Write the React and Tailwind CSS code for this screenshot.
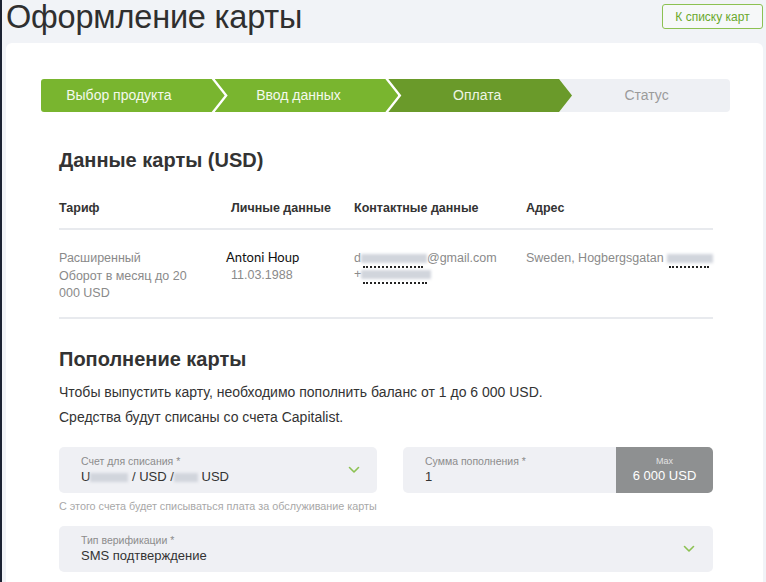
import React from 'react';

const Chevron = ({ className }) => (
  <svg viewBox="0 0 12 8" className={className} fill="none" stroke="#8cc152" strokeWidth="1.6" strokeLinecap="round" strokeLinejoin="round">
    <path d="M1.5 1.5 L6 6 L10.5 1.5" />
  </svg>
);

const Blur = ({ w, dots }) => (
  <span className="relative inline-block align-middle" style={{ width: w }}>
    <span className="block h-[9px] bg-gray-300 blur-[1.5px]" />
    {dots && <span className="absolute left-[2px] right-[4px] top-[12px] border-b-2 border-dotted border-[#222]" />}
  </span>
);

const Steps = () => (
  <div className="flex h-[33px] w-[689px] ml-[35px] text-[14px]">
    <div className="relative z-30 flex-1 flex items-center justify-center bg-[#79b52f] text-[#f4f9ec] rounded-l-[3px] [clip-path:polygon(0_0,calc(100%-13px)_0,100%_50%,calc(100%-13px)_100%,0_100%)]">
      <span className="-ml-[28px]">Выбор продукта</span>
    </div>
    <div className="relative z-20 -ml-[10px] flex-1 flex items-center justify-center bg-[#79b52f] text-[#f4f9ec] [clip-path:polygon(0_0,calc(100%-13px)_0,100%_50%,calc(100%-13px)_100%,0_100%,13px_50%)]">
      <span className="-ml-[16px]">Ввод данных</span>
    </div>
    <div className="relative z-10 -ml-[10px] flex-1 flex items-center justify-center bg-[#6a9a2a] text-[#eef5e4] [clip-path:polygon(0_0,calc(100%-13px)_0,100%_50%,calc(100%-13px)_100%,0_100%,13px_50%)]">
      <span className="-ml-[6px]">Оплата</span>
    </div>
    <div className="-ml-[13px] w-[171px] flex items-center justify-center bg-[#eef0f4] text-[#9b9b9b] rounded-r-[4px]">
      <span className="ml-[4px]">Статус</span>
    </div>
  </div>
);

export default function App() {
  return (
    <div className="min-h-[582px] bg-[#f1f3f7] border-l-2 border-[#1b2232] pl-[4px] pr-[3px] text-[#333] font-['Liberation_Sans',Arial,sans-serif]">
      <div className="flex items-start justify-between h-[43px]">
        <h1 className="text-[32.5px] leading-[36px] -mt-[1px] text-[#2f2f2f] tracking-[-0.2px]">Оформление карты</h1>
        <button className="mt-[4px] h-[25px] w-[101px] border border-[#8cc152] rounded-[3px] bg-[#f6f8f9] text-[12px] text-[#6aa82c]">
          К списку карт
        </button>
      </div>

      <div className="bg-white rounded-t-[6px] pt-[36px] pb-[10px] min-h-[539px]">
        <Steps />

        <div className="ml-[53px] w-[654px]">
          <h2 className="mt-[36px] text-[20px] leading-[24px] font-bold text-[#333]">Данные карты (USD)</h2>

          <div className="grid grid-cols-[172px_123px_172px_1fr] mt-[29px] h-[29px] border-b-2 border-[#e8eaee] text-[12.5px] font-bold text-[#333] leading-[15px]">
            <div>Тариф</div>
            <div>Личные данные</div>
            <div>Контактные данные</div>
            <div>Адрес</div>
          </div>

          <div className="grid grid-cols-[172px_123px_172px_1fr] pt-[20px] h-[89px] border-b-2 border-[#e8eaee] text-[12.5px] leading-[17.5px] text-[#8a8a8a]">
            <div>
              Расширенный<br />Оборот в месяц до 20<br />000 USD
            </div>
            <div>
              <div className="-ml-[5px] -mt-[1px] text-[13px] text-[#111] font-['Lato',sans-serif]">Antoni Houp</div>
              <div>11.03.1988</div>
            </div>
            <div>
              <div>d<Blur w={66} dots />@gmail.com</div>
              <div className="-mt-[2px]">+<Blur w={70} dots /></div>
            </div>
            <div className="whitespace-nowrap">
              Sweden, Hogbergsgatan <Blur w={46} dots />
            </div>
          </div>

          <h2 className="mt-[28px] text-[20px] leading-[24px] font-bold text-[#333]">Пополнение карты</h2>
          <p className="mt-[9px] text-[14px] leading-[25px] text-[#333]">
            Чтобы выпустить карту, необходимо пополнить баланс от 1 до 6 000 USD.
          </p>
          <p className="text-[14px] leading-[25px] text-[#333]">Средства будут списаны со счета Capitalist.</p>

          <div className="flex gap-[26px] mt-[17px]">
            <div className="w-[318px]">
              <div className="h-[46px] bg-[#eff0f4] rounded-[5px] flex items-center justify-between pl-[22px] pr-[17px]">
                <div>
                  <div className="text-[10.5px] leading-[13px] text-[#8c8c8c]">Счет для списания *</div>
                  <div className="text-[13px] leading-[17px] text-[#333]">
                    U<Blur w={38} /> / USD /<Blur w={24} /> USD
                  </div>
                </div>
                <Chevron className="w-[12px] h-[8px]" />
              </div>
              <div className="mt-[7px] text-[10.8px] leading-[12px] text-[#a8a8a8] whitespace-nowrap">
                С этого счета будет списываться плата за обслуживание карты
              </div>
            </div>
            <div className="w-[310px] h-[46px] flex rounded-[5px] overflow-hidden">
              <div className="flex-1 bg-[#eff0f4] pl-[22px] flex flex-col justify-center">
                <div className="text-[10.5px] leading-[13px] text-[#8c8c8c]">Сумма пополнения *</div>
                <div className="text-[13px] leading-[17px] text-[#333]">1</div>
              </div>
              <div className="w-[97px] bg-[#8e9091] flex flex-col items-center justify-center">
                <div className="text-[9px] leading-[12px] text-[#e2e2e2]">Max</div>
                <div className="text-[13px] leading-[18px] text-white">6 000 USD</div>
              </div>
            </div>
          </div>

          <div className="mt-[14px] h-[46px] bg-[#eff0f4] rounded-[5px] flex items-center justify-between pl-[22px] pr-[18px]">
            <div>
              <div className="text-[10.5px] leading-[13px] text-[#8c8c8c]">Тип верификации *</div>
              <div className="text-[13px] leading-[17px] text-[#333]">SMS подтверждение</div>
            </div>
            <Chevron className="w-[12px] h-[8px]" />
          </div>
        </div>
      </div>
    </div>
  );
}
